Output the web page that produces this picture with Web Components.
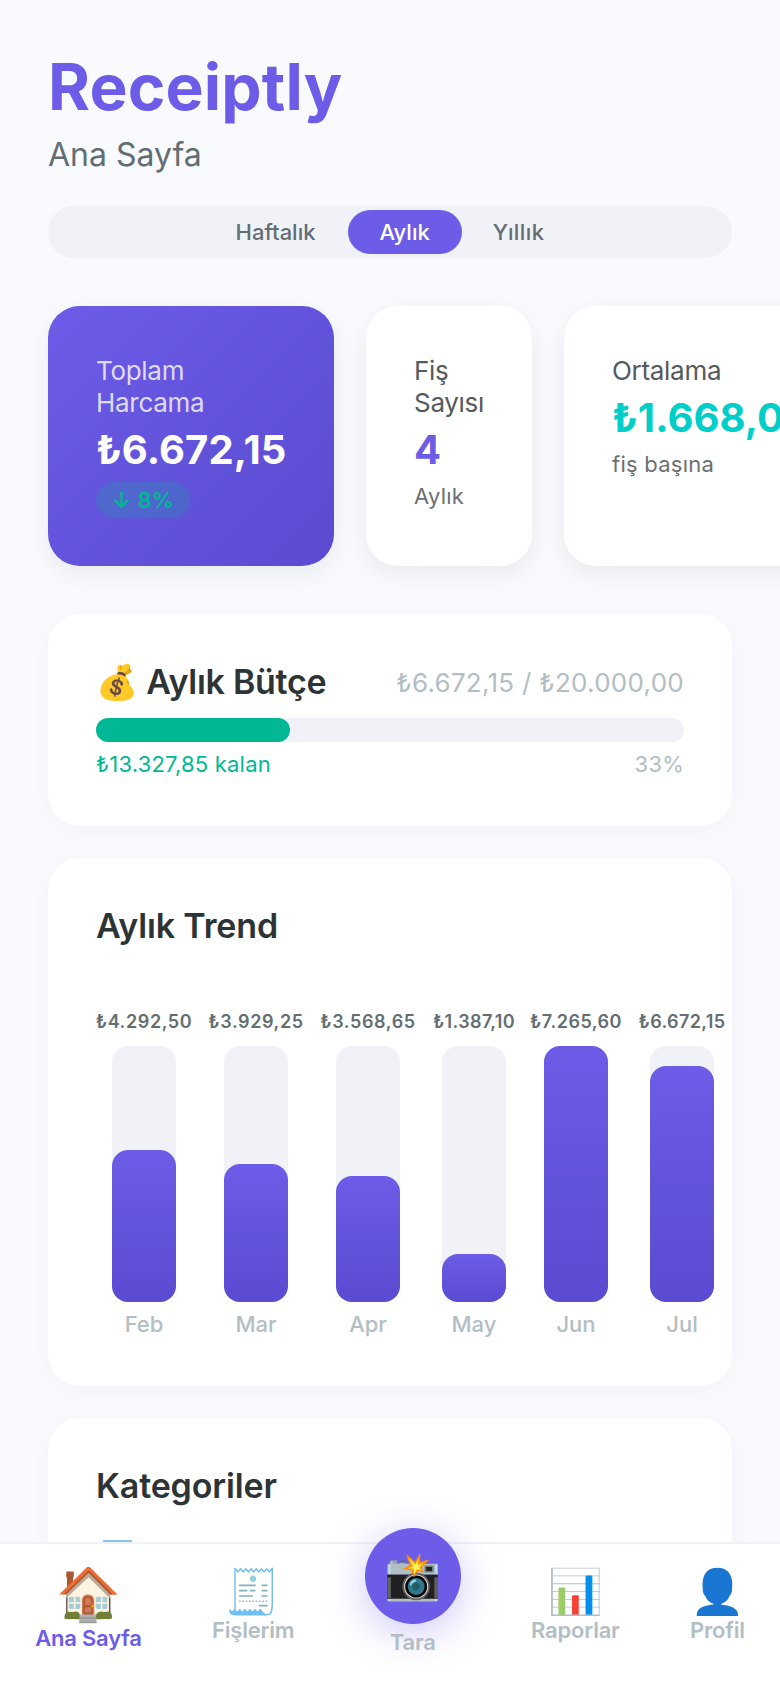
<!DOCTYPE html>
<html lang="tr">
<head>
<meta charset="utf-8">
<title>Receiptly</title>
<style>
  html, body { margin: 0; height: 100%; overflow: hidden; }
  body {
    background: #f8fafe;
    color: #2d3436;
    font-family: Inter, "Noto Sans", "Noto Color Emoji", sans-serif;
    --primary: #6c5ce7;
    --primary-dark: #5a4bd1;
    --track: #f0f2f7;
    --muted: #b2bec3;
    --text-2: #636e72;
    --success: #00b894;
  }
</style>
</head>
<body>
<rc-app>
  <rc-header slot="top" heading="Receiptly">Ana Sayfa</rc-header>
  <rc-segments slot="top" items="Haftalık,Aylık,Yıllık" active="Aylık"></rc-segments>

  <rc-stat slot="stats" tone="primary" label="Toplam Harcama" value="₺6.672,15" change="↓ 8%"></rc-stat>
  <rc-stat slot="stats" tone="count" label="Fiş Sayısı" value="4" note="Aylık"></rc-stat>
  <rc-stat slot="stats" tone="avg" label="Ortalama" value="₺1.668,04" note="fiş başına"></rc-stat>

  <rc-card>
    <rc-budget percent="33" spent="₺6.672,15 / ₺20.000,00" left="₺13.327,85 kalan">💰 Aylık Bütçe</rc-budget>
  </rc-card>
  <rc-card heading="Aylık Trend">
    <rc-chart></rc-chart>
  </rc-card>
  <rc-card heading="Kategoriler">
    <rc-category></rc-category>
  </rc-card>

  <rc-nav slot="nav">
    <rc-nav-item icon="🏠" active>Ana Sayfa</rc-nav-item>
    <rc-nav-item icon="🧾">Fişlerim</rc-nav-item>
    <rc-nav-item icon="📸" scan>Tara</rc-nav-item>
    <rc-nav-item icon="📊">Raporlar</rc-nav-item>
    <rc-nav-item icon="👤">Profil</rc-nav-item>
  </rc-nav>
</rc-app>

<script>
(function () {
  // w: 列宽, h: 柱高, ls: 金额字距
  var TREND = [
    { month: 'Feb', text: '₺4.292,50', w: 96, h: 152, ls: 0.6 },
    { month: 'Mar', text: '₺3.929,25', w: 96, h: 138, ls: 0.6 },
    { month: 'Apr', text: '₺3.568,65', w: 96, h: 126, ls: 0.6 },
    { month: 'May', text: '₺1.387,10', w: 84, h: 48, ls: 0.35 },
    { month: 'Jun', text: '₺7.265,60', w: 88, h: 256, ls: 0.5 },
    { month: 'Jul', text: '₺6.672,15', w: 92, h: 236, ls: 0.35 }
  ];

  class Base extends HTMLElement {
    connectedCallback() {
      if (this.shadowRoot) return;
      this.attachShadow({ mode: 'open' }).innerHTML = '<style>' + this.css() + '</style>' + this.html();
    }
    attr(name) {
      return this.getAttribute(name) || '';
    }
  }

  class RcApp extends Base {
    css() {
      return [
        ':host{display:flex;flex-direction:column;height:1688px;overflow:hidden;}',
        'main{flex:1;min-height:0;overflow:hidden;padding:48px 48px 0;box-sizing:border-box;}',
        '.stats{display:flex;gap:32px;margin:48px -48px 0;padding:0 48px;}',
        '.cards{display:flex;flex-direction:column;gap:32px;margin-top:48px;}'
      ].join('');
    }
    html() {
      return '<main><slot name="top"></slot><div class="stats"><slot name="stats"></slot></div>' +
        '<div class="cards"><slot></slot></div></main><slot name="nav"></slot>';
    }
  }

  class RcHeader extends Base {
    css() {
      return [
        ':host{display:block;height:126px;}',
        'h1{margin:0;font-size:64px;line-height:77px;font-weight:700;letter-spacing:.15px;color:var(--primary);}',
        'p{margin:10px 0 0;font-size:32px;line-height:39px;color:var(--text-2);}'
      ].join('');
    }
    html() {
      return '<h1>' + this.attr('heading') + '</h1><p><slot></slot></p>';
    }
  }

  class RcSegments extends Base {
    css() {
      return [
        ':host{display:flex;justify-content:center;margin-top:32px;padding:4px;border-radius:26px;background:var(--track);}',
        'button{border:0;background:none;font-family:inherit;font-size:22px;line-height:28px;font-weight:500;',
        'padding:8px 32px;border-radius:22px;color:var(--text-2);}',
        'button.on{background:var(--primary);color:#fff;}',
        'button:last-child{letter-spacing:.4px;padding-left:31px;}'
      ].join('');
    }
    html() {
      var active = this.attr('active');
      return this.attr('items').split(',').map(function (t) {
        return '<button' + (t === active ? ' class="on"' : '') + '>' + t + '</button>';
      }).join('');
    }
  }

  class RcStat extends Base {
    css() {
      return [
        ':host{display:flex;flex-direction:column;align-items:flex-start;gap:8px;flex:none;box-sizing:border-box;width:286px;height:260px;',
        'padding:48px;border-radius:32px;background:#fff;box-shadow:0 8px 24px rgba(0,0,0,.065);}',
        ':host([tone=primary]){background:linear-gradient(135deg,var(--primary),var(--primary-dark));}',
        ':host([tone=count]){width:166px;}',
        ':host([tone=avg]){width:300px;}',
        '.label{padding-top:1px;margin-bottom:-1px;font-size:26px;line-height:32px;letter-spacing:-.3px;color:#555a5c;}',
        '.value{font-size:40px;line-height:48px;font-weight:700;letter-spacing:.08px;white-space:nowrap;color:var(--primary);}',
        '.note{font-size:22px;line-height:28px;letter-spacing:.25px;color:#6b7073;}',
        '.change{box-sizing:border-box;padding:4px 16px;border-radius:18px;font-size:22px;line-height:28px;font-weight:600;',
        'letter-spacing:.25px;color:var(--success);background:rgba(0,184,148,.2);white-space:nowrap;}',
        ':host([tone=primary]) .label{color:rgba(255,255,255,.8);}',
        ':host([tone=primary]) .value{color:#fff;}',
        ':host([tone=avg]) .value{color:#00cec9;}'
      ].join('');
    }
    html() {
      var change = this.attr('change');
      return '<div class="label">' + this.attr('label') + '</div><div class="value">' + this.attr('value') + '</div>' +
        (change ? '<div class="change">' + change + '</div>' : '<div class="note">' + this.attr('note') + '</div>');
    }
  }

  class RcCard extends Base {
    css() {
      return [
        ':host{display:block;padding:48px;border-radius:32px;background:#fff;box-shadow:0 4px 24px rgba(0,0,0,.03);}',
        'h2{margin:0;font-size:34px;line-height:40px;font-weight:600;letter-spacing:-.15px;}'
      ].join('');
    }
    html() {
      var heading = this.attr('heading');
      return (heading ? '<h2>' + heading + '</h2>' : '') + '<slot></slot>';
    }
  }

  class RcBudget extends Base {
    css() {
      return [
        ':host{display:block;}',
        '.row{display:flex;justify-content:space-between;align-items:center;white-space:nowrap;}',
        '.top{height:40px;margin-bottom:16px;}',
        'h2{margin:0;font-size:34px;line-height:40px;font-weight:600;letter-spacing:-.28px;}',
        '.spent{padding-top:2px;font-size:26px;line-height:32px;letter-spacing:.27px;color:var(--muted);}',
        '.track{height:24px;margin-bottom:8px;border-radius:12px;background:var(--track);}',
        '.fill{height:100%;border-radius:12px;background:var(--success);}',
        '.foot{font-size:22px;line-height:28px;letter-spacing:.2px;color:var(--muted);}',
        '.left{color:var(--success);}'
      ].join('');
    }
    html() {
      var p = this.attr('percent');
      return '<div class="row top"><h2><slot></slot></h2><span class="spent">' + this.attr('spent') + '</span></div>' +
        '<div class="track"><div class="fill" style="width:' + p + '%"></div></div>' +
        '<div class="row foot"><span class="left">' + this.attr('left') + '</span><span>' + p + '%</span></div>';
    }
  }

  class RcChart extends Base {
    css() {
      return [
        ':host{display:flex;gap:16px;margin-top:64px;}',
        '.col{display:flex;flex-direction:column;align-items:center;flex:none;}',
        '.amount{font-size:18px;line-height:24px;font-weight:600;white-space:nowrap;margin-bottom:12px;color:var(--text-2);}',
        '.track{display:flex;align-items:flex-end;width:64px;height:256px;border-radius:16px;background:var(--track);}',
        '.fill{width:100%;border-radius:16px;background:linear-gradient(180deg,var(--primary),var(--primary-dark));}',
        '.month{margin-top:8px;font-size:22px;line-height:28px;font-weight:500;color:var(--muted);}'
      ].join('');
    }
    html() {
      return TREND.map(function (d) {
        return '<div class="col" style="width:' + d.w + 'px">' +
          '<div class="amount" style="letter-spacing:' + d.ls + 'px">' + d.text + '</div>' +
          '<div class="track"><div class="fill" style="height:' + d.h + 'px"></div></div>' +
          '<div class="month">' + d.month + '</div></div>';
      }).join('');
    }
  }

  // 列表首行，大部分被底部导航遮住
  class RcCategory extends Base {
    css() {
      return [
        ':host{display:block;height:120px;margin-top:34px;padding-left:7px;}',
        'svg{display:block;}'
      ].join('');
    }
    html() {
      return '<svg width="29" height="40" viewBox="0 0 29 40"><rect width="29" height="40" rx="1" fill="#82c4ee"/></svg>';
    }
  }

  class RcNav extends Base {
    css() {
      return ':host{position:relative;display:flex;justify-content:space-around;align-items:flex-start;flex:none;' +
        'height:146px;box-sizing:border-box;border-top:2px solid var(--track);background:#fff;}';
    }
    html() {
      return '<slot></slot>';
    }
  }

  class RcNavItem extends Base {
    css() {
      return [
        ':host{display:flex;flex-direction:column;align-items:center;padding-top:20px;color:var(--muted);}',
        '.icon{font-size:44px;line-height:54px;height:52px;}',
        '.text{font-size:22px;line-height:28px;font-weight:600;letter-spacing:-.2px;white-space:nowrap;}',
        ':host([active]){color:var(--primary);}',
        ':host([active]) .icon{font-size:52px;line-height:59px;height:60px;}',
        ':host([scan]){padding-top:0;margin-top:-16px;}',
        ':host([scan]) .icon{width:96px;height:96px;line-height:94px;text-align:center;font-size:46px;border-radius:50%;',
        'background:var(--primary);box-shadow:0 8px 40px rgba(108,92,231,.35);}',
        ':host([scan]) .text{margin-top:4px;}'
      ].join('');
    }
    html() {
      return '<div class="icon">' + this.attr('icon') + '</div><div class="text"><slot></slot></div>';
    }
  }

  customElements.define('rc-app', RcApp);
  customElements.define('rc-header', RcHeader);
  customElements.define('rc-segments', RcSegments);
  customElements.define('rc-stat', RcStat);
  customElements.define('rc-card', RcCard);
  customElements.define('rc-budget', RcBudget);
  customElements.define('rc-chart', RcChart);
  customElements.define('rc-category', RcCategory);
  customElements.define('rc-nav', RcNav);
  customElements.define('rc-nav-item', RcNavItem);
})();
</script>
</body>
</html>
